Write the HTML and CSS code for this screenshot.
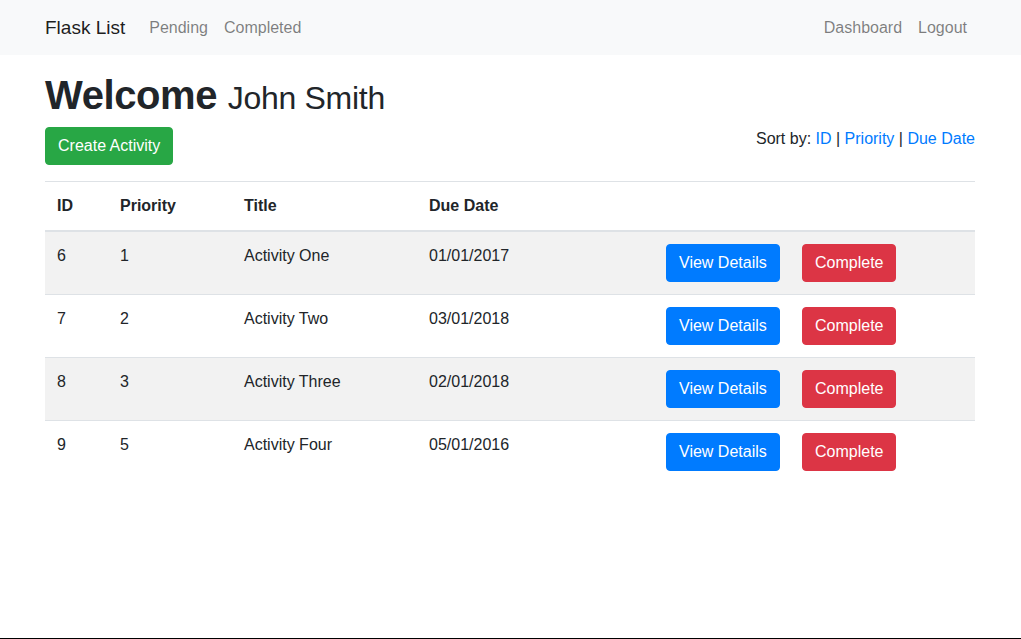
FILE: index.html
```html
<!DOCTYPE html>
<html lang="en">
<head>
<meta charset="utf-8">
<title>Flask List</title>
<link rel="stylesheet" href="styles.css">
</head>
<body>
<div class="page">
  <nav class="navbar">
    <div class="container nav-inner">
      <a class="brand" href="#">Flask List</a>
      <ul class="nav">
        <li><a class="nav-link" href="#">Pending</a></li>
        <li><a class="nav-link" href="#">Completed</a></li>
      </ul>
      <ul class="nav nav-right">
        <li><a class="nav-link" href="#">Dashboard</a></li>
        <li><a class="nav-link" href="#">Logout</a></li>
      </ul>
    </div>
  </nav>
  <main class="container">
    <h1 class="title">Welcome <small>John Smith</small></h1>
    <div class="toolbar">
      <a class="btn btn-success" href="#">Create Activity</a>
      <div class="sort">Sort by: <a href="#">ID</a> | <a href="#">Priority</a> | <a href="#">Due Date</a></div>
    </div>
    <table class="table">
      <colgroup>
        <col class="c-id"><col class="c-pri"><col class="c-title"><col class="c-due"><col class="c-view"><col class="c-done">
      </colgroup>
      <thead>
        <tr><th>ID</th><th>Priority</th><th>Title</th><th>Due Date</th><th></th><th></th></tr>
      </thead>
      <tbody>
        <tr><td>6</td><td>1</td><td>Activity One</td><td>01/01/2017</td><td><a class="btn btn-primary" href="#">View Details</a></td><td><a class="btn btn-danger" href="#">Complete</a></td></tr>
        <tr><td>7</td><td>2</td><td>Activity Two</td><td>03/01/2018</td><td><a class="btn btn-primary" href="#">View Details</a></td><td><a class="btn btn-danger" href="#">Complete</a></td></tr>
        <tr><td>8</td><td>3</td><td>Activity Three</td><td>02/01/2018</td><td><a class="btn btn-primary" href="#">View Details</a></td><td><a class="btn btn-danger" href="#">Complete</a></td></tr>
        <tr><td>9</td><td>5</td><td>Activity Four</td><td>05/01/2016</td><td><a class="btn btn-primary" href="#">View Details</a></td><td><a class="btn btn-danger" href="#">Complete</a></td></tr>
      </tbody>
    </table>
  </main>
</div>
</body>
</html>
```
FILE: styles.css
```css
* { box-sizing: border-box; }
html, body { margin: 0; padding: 0; }
body {
  font-family: "Liberation Sans", Arial, sans-serif;
  font-size: 16px;
  line-height: 1.5;
  color: #212529;
  background: #fff;
}
a { text-decoration: none; }
.page {
  min-height: 100vh;
  border-bottom: 1px solid #000;
}
.container {
  width: 961px;
  margin: 0 auto;
  padding: 0 16px 0 15px;
}
.navbar {
  background: #f8f9fa;
}
.nav-inner {
  display: flex;
  align-items: center;
  height: 55px;
}
.brand {
  font-size: 19px;
  line-height: 30px;
  margin-right: 16px;
  color: rgba(0,0,0,.9);
}
.nav {
  display: flex;
  list-style: none;
  margin: 0;
  padding: 0;
}
.nav-right { margin-left: auto; }
.nav-link {
  display: block;
  padding: 8px;
  color: rgba(0,0,0,.5);
}
.title {
  margin: 16px 0 8px;
  font-size: 40px;
  font-weight: 700;
  line-height: 1.2;
  letter-spacing: -0.4px;
}
.title small {
  font-size: 80%;
  font-weight: 400;
  letter-spacing: -0.3px;
}
.toolbar {
  display: flex;
  justify-content: space-between;
  align-items: flex-start;
  margin-bottom: 16px;
}
.sort a { color: #007bff; }
.btn {
  display: inline-block;
  padding: 6px 12px;
  font-size: 16px;
  line-height: 24px;
  border-radius: 4px;
  color: #fff;
  border: 1px solid transparent;
  white-space: nowrap;
}
.btn-success { background: #28a745; border-color: #28a745; }
.btn-primary { background: #007bff; border-color: #007bff; }
.btn-danger { background: #dc3545; border-color: #dc3545; }
.table {
  width: 100%;
  border-collapse: collapse;
  table-layout: fixed;
}
.c-id { width: 63px; }
.c-pri { width: 124px; }
.c-title { width: 185px; }
.c-due { width: 237px; }
.c-view { width: 136px; }
.c-done { width: 185px; }
.table th, .table td {
  padding: 12px;
  vertical-align: top;
  border-top: 1px solid #dee2e6;
  text-align: left;
}
.table th { font-weight: 700; }
.table thead th { border-bottom: 2px solid #dee2e6; }
.table tbody tr:nth-child(odd) { background: rgba(0,0,0,.05); }
.table tbody tr:last-child td { border-bottom: 0; }
```
